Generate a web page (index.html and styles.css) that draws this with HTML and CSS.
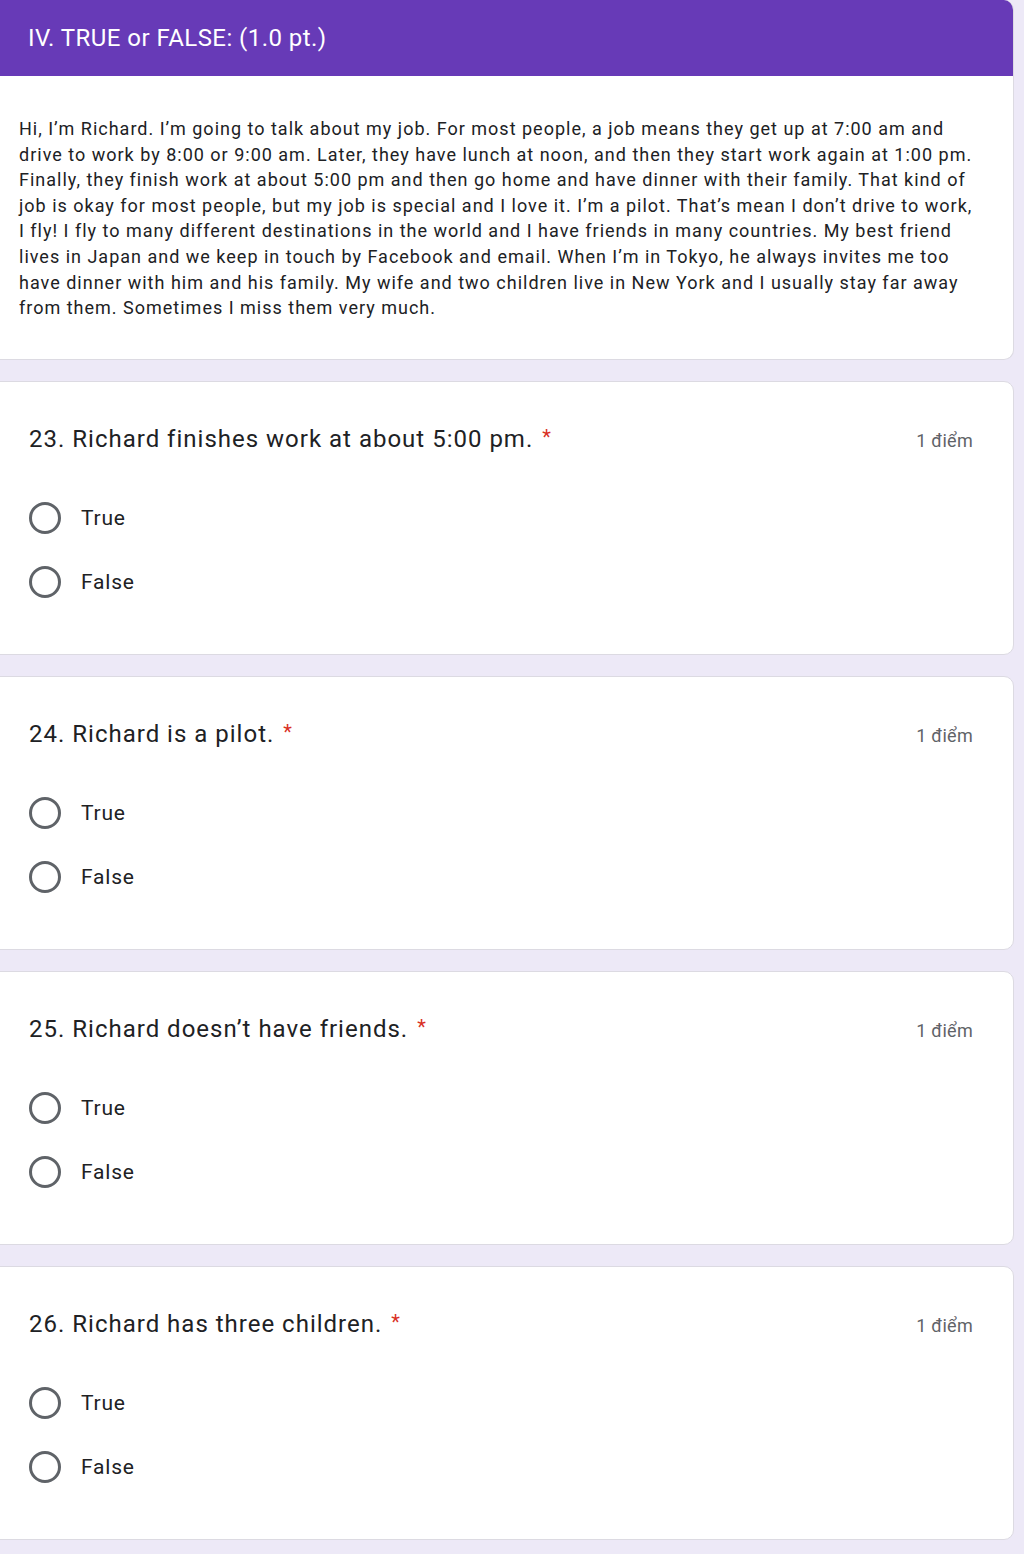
FILE: index.html
```html
<!DOCTYPE html>
<html lang="vi">
<head>
<meta charset="utf-8">
<title>IV. TRUE or FALSE</title>
<link rel="stylesheet" href="styles.css">
</head>
<body>
<main class="form">
  <section class="card intro">
    <header class="intro-head">
      <h1 class="intro-title">IV. TRUE or FALSE: (1.0 pt.)</h1>
    </header>
    <p class="intro-text">Hi, I’m Richard. I’m going to talk about my job. For most people, a job means they get up at 7:00 am and<br>drive to work by 8:00 or 9:00 am. Later, they have lunch at noon, and then they start work again at 1:00 pm.<br>Finally, they finish work at about 5:00 pm and then go home and have dinner with their family. That kind of<br>job is okay for most people, but my job is special and I love it. I’m a pilot. That’s mean I don’t drive to work,<br>I fly! I fly to many different destinations in the world and I have friends in many countries. My best friend<br>lives in Japan and we keep in touch by Facebook and email. When I’m in Tokyo, he always invites me too<br>have dinner with him and his family. My wife and two children live in New York and I usually stay far away<br>from them. Sometimes I miss them very much.</p>
  </section>

  <section class="card question">
    <div class="q-head">
      <h2 class="q-title">23. Richard finishes work at about 5:00 pm. <span class="req">*</span></h2>
      <span class="q-points">1 điểm</span>
    </div>
    <ul class="options">
      <li class="option"><span class="radio"></span><span class="opt-label">True</span></li>
      <li class="option"><span class="radio"></span><span class="opt-label">False</span></li>
    </ul>
  </section>

  <section class="card question">
    <div class="q-head">
      <h2 class="q-title">24. Richard is a pilot. <span class="req">*</span></h2>
      <span class="q-points">1 điểm</span>
    </div>
    <ul class="options">
      <li class="option"><span class="radio"></span><span class="opt-label">True</span></li>
      <li class="option"><span class="radio"></span><span class="opt-label">False</span></li>
    </ul>
  </section>

  <section class="card question">
    <div class="q-head">
      <h2 class="q-title">25. Richard doesn’t have friends. <span class="req">*</span></h2>
      <span class="q-points">1 điểm</span>
    </div>
    <ul class="options">
      <li class="option"><span class="radio"></span><span class="opt-label">True</span></li>
      <li class="option"><span class="radio"></span><span class="opt-label">False</span></li>
    </ul>
  </section>

  <section class="card question">
    <div class="q-head">
      <h2 class="q-title">26. Richard has three children. <span class="req">*</span></h2>
      <span class="q-points">1 điểm</span>
    </div>
    <ul class="options">
      <li class="option"><span class="radio"></span><span class="opt-label">True</span></li>
      <li class="option"><span class="radio"></span><span class="opt-label">False</span></li>
    </ul>
  </section>
</main>
</body>
</html>
```

FILE: styles.css
```css
* { box-sizing: border-box; }

html, body {
  margin: 0;
  padding: 0;
}

body {
  background: #ede9f7;
  font-family: Roboto, "Noto Sans", "Liberation Sans", sans-serif;
  color: #202124;
  overflow: hidden;
}

.form {
  display: flex;
  flex-direction: column;
  gap: 21px;
  margin-left: -12px;
  width: 1026px;
}

.card {
  background: #ffffff;
  border: 1px solid #dcdae2;
  border-radius: 10px;
  overflow: hidden;
}

.intro {
  border-top: none;
  border-top-left-radius: 0;
}

.intro-head {
  background: #673ab7;
  height: 76px;
  display: flex;
  align-items: center;
  padding-left: 39px;
}

.intro-title {
  margin: 0;
  font-size: 24px;
  font-weight: 400;
  color: #ffffff;
  letter-spacing: 0.45px;
}

.intro-text {
  margin: 0;
  padding: 40px 0 38px 30px;
  font-size: 18px;
  line-height: 25.6px;
  letter-spacing: 1px;
  color: #202124;
}

.question {
  height: 274px;
  padding: 41px 0 0 40px;
}

.q-head {
  display: flex;
  justify-content: space-between;
  align-items: center;
  height: 32px;
  padding-right: 40px;
}

.q-title {
  margin: 0;
  font-size: 24px;
  font-weight: 400;
  letter-spacing: 1px;
  color: #202124;
}

.req {
  color: #d93025;
  font-size: 20px;
  vertical-align: top;
  margin-left: 2px;
}

.q-points {
  font-size: 18px;
  padding-top: 3px;
  letter-spacing: 0.3px;
  color: #5f6368;
}

.options {
  list-style: none;
  margin: 31px 0 0 0;
  padding: 0;
}

.option {
  display: flex;
  align-items: center;
  height: 64px;
}

.radio {
  width: 32px;
  height: 32px;
  border: 3px solid #5f6368;
  border-radius: 50%;
  flex: none;
}

.opt-label {
  margin-left: 20px;
  font-size: 21px;
  letter-spacing: 0.8px;
  color: #202124;
}
```
